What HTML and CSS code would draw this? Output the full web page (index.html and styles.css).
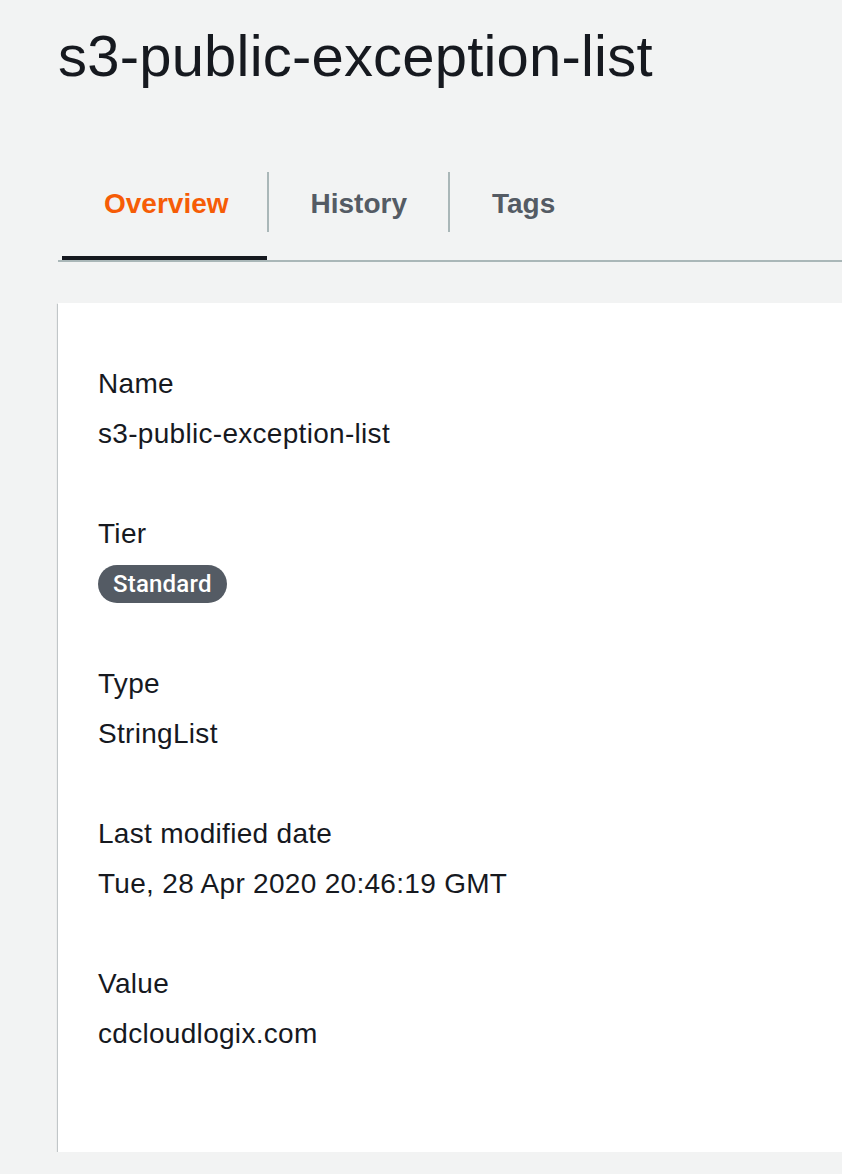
FILE: index.html
```html
<!DOCTYPE html>
<html lang="en">
<head>
<meta charset="utf-8">
<title>s3-public-exception-list</title>
<link rel="stylesheet" href="styles.css">
</head>
<body>
<div class="page">
  <h1 class="title">s3-public-exception-list</h1>
  <nav class="tabs">
    <a class="tab active">Overview</a>
    <span class="sep"></span>
    <a class="tab">History</a>
    <span class="sep"></span>
    <a class="tab">Tags</a>
  </nav>
  <section class="card">
    <div class="field">
      <div class="label">Name</div>
      <div class="value">s3-public-exception-list</div>
    </div>
    <div class="field">
      <div class="label">Tier</div>
      <div class="value"><span class="badge">Standard</span></div>
    </div>
    <div class="field">
      <div class="label">Type</div>
      <div class="value">StringList</div>
    </div>
    <div class="field">
      <div class="label">Last modified date</div>
      <div class="value">Tue, 28 Apr 2020 20:46:19 GMT</div>
    </div>
    <div class="field">
      <div class="label">Value</div>
      <div class="value">cdcloudlogix.com</div>
    </div>
  </section>
</div>
</body>
</html>
```

FILE: styles.css
```css
html, body {
  margin: 0;
  padding: 0;
  background: #f2f3f3;
}

body {
  font-family: "Liberation Sans", Arial, sans-serif;
  color: #16191f;
}

.page {
  padding-left: 58px;
}

.title {
  margin: 22px 0 0;
  font-size: 58px;
  line-height: 68px;
  font-weight: 400;
  color: #16191f;
  letter-spacing: 0.2px;
}

.tabs {
  display: flex;
  align-items: flex-start;
  margin-top: 70px;
  padding-left: 4px;
  border-bottom: 2px solid #aab7b8;
}

.tab {
  display: block;
  padding: 14px 41px 22px 42px;
  line-height: 60px;
  font-size: 28px;
  font-weight: 700;
  color: #545b64;
  border-bottom: 4px solid transparent;
}

.tab.active {
  padding-right: 38px;
  color: #f65c06;
  border-bottom-color: #16191f;
}

.sep {
  width: 2px;
  height: 60px;
  margin-top: 12px;
  background: #aab7b8;
}

.card {
  margin-top: 41px;
  background: #ffffff;
  padding: 56px 40px 43px;
  box-shadow: 0 1px 1px 0 rgba(0, 28, 36, 0.35), -1px 1px 1px 0 rgba(0, 28, 36, 0.15);
}

.field {
  margin-bottom: 50px;
}

.label,
.value {
  font-size: 28px;
  line-height: 50px;
  height: 50px;
  color: #16191f;
  letter-spacing: 0.3px;
}

.value {
  display: flex;
  align-items: center;
}

.badge {
  display: inline-flex;
  align-items: center;
  height: 38px;
  padding: 0 15px;
  border-radius: 19px;
  background: #545b64;
  color: #ffffff;
  font-family: Roboto, "Liberation Sans", sans-serif;
  font-size: 24px;
  font-weight: 500;
  letter-spacing: 0.2px;
}
```
